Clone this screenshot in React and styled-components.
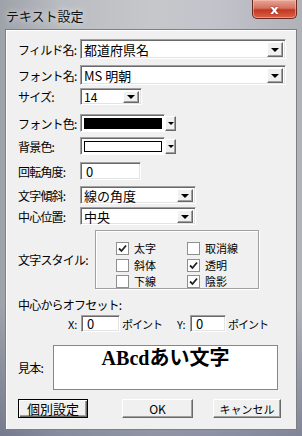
import React from "react";
import styled, { createGlobalStyle } from "styled-components";

const Global = createGlobalStyle`
	html, body {
		margin: 0;
		padding: 0;
		background: #a8adb5;
	}
	* {
		box-sizing: border-box;
	}
`;

const Window = styled.div`
	width: 302px;
	height: 436px;
	display: flex;
	flex-direction: column;
	padding: 0 5px 6px 5px;
	background: linear-gradient(
			180deg,
			rgba(0, 0, 0, 0) 70%,
			rgba(40, 50, 90, 0.35) 100%
		),
		linear-gradient(
			90deg,
			#9ea2a9 0%,
			#b9bcc1 20%,
			#c6c7ca 50%,
			#c3c3cc 70%,
			#b0b2b8 100%
		);
	font-family: "Noto Sans CJK JP", "Noto Sans", sans-serif;
	font-size: 12px;
	color: #000;
`;

const TitleBar = styled.div`
	height: 29px;
	display: flex;
	align-items: flex-start;
	justify-content: space-between;
`;

const Title = styled.div`
	margin: 6px 0 0 1px;
	font-size: 13px;
	color: #111;
	text-shadow: 0 0 6px rgba(255, 255, 255, 0.9);
`;

const CloseButton = styled.div`
	width: 45px;
	height: 19px;
	display: flex;
	align-items: center;
	justify-content: center;
	border: 1px solid #6d2a22;
	border-top: none;
	border-radius: 0 0 5px 5px;
	background: linear-gradient(180deg, #e7a596 0%, #d47260 45%, #c4381f 55%, #d8624a 100%);
	box-shadow: inset 0 0 0 1px rgba(255, 200, 190, 0.5);
	color: #fff;
	font-family: "DejaVu Sans", sans-serif;
	font-weight: 700;
	font-size: 13px;
	text-shadow: 0 0 2px #5a1a10;
`;

const Client = styled.div`
	flex: 1;
	display: flex;
	flex-direction: column;
	padding: 9px 0 0 12px;
	background: #f0f0f0;
	border: 1px solid #7c7f85;
	box-shadow: inset 1px 1px 0 #ffffff;
`;

const Row = styled.div`
	display: flex;
	align-items: center;
	margin-top: ${(p) => p.$mt || 0}px;
	height: ${(p) => p.$h || 20}px;
`;

const Label = styled.div`
	width: ${(p) => p.$w || 62}px;
	white-space: nowrap;
	flex-shrink: 0;
	letter-spacing: -0.8px;
`;

const Sunken = styled.div`
	width: ${(p) => p.$w}px;
	height: 100%;
	background: #fff;
	border-top: 1px solid #a0a0a0;
	border-left: 1px solid #a0a0a0;
	border-right: 1px solid #ffffff;
	border-bottom: 1px solid #ffffff;
	box-shadow: inset 1px 1px 0 #696969, inset -1px -1px 0 #e3e3e3;
	display: flex;
	align-items: center;
	padding: 0 2px 0 3px;
`;

const ComboText = styled.div`
	flex: 1;
	white-space: nowrap;
	font-size: ${(p) => p.$fs || 13}px;
`;

const DropButton = styled.div`
	width: ${(p) => p.$w || 16}px;
	height: calc(100% - 3px);
	margin-top: 1px;
	background: #f0f0f0;
	border-top: 1px solid #ffffff;
	border-left: 1px solid #ffffff;
	border-right: 1px solid #696969;
	border-bottom: 1px solid #696969;
	box-shadow: inset -1px -1px 0 #a0a0a0;
	display: flex;
	align-items: center;
	justify-content: center;
`;

const Arrow = styled.div`
	width: 0;
	height: 0;
	border-left: ${(p) => p.$s || 4}px solid transparent;
	border-right: ${(p) => p.$s || 4}px solid transparent;
	border-top: ${(p) => p.$s || 4}px solid #000;
`;

const Combo = ({ w, text, fs }) => (
	<Sunken $w={w}>
		<ComboText $fs={fs}>{text}</ComboText>
		<DropButton>
			<Arrow />
		</DropButton>
	</Sunken>
);

const ColorField = styled.div`
	width: 85px;
	height: 100%;
	background: #fff;
	border-top: 1px solid #a0a0a0;
	border-left: 1px solid #a0a0a0;
	border-right: 1px solid #fff;
	border-bottom: 1px solid #fff;
	box-shadow: inset 1px 1px 0 #696969;
	padding: 3px 2px 2px 3px;
`;

const Swatch = styled.div`
	width: 100%;
	height: 100%;
	border: 1px solid #000;
	background: ${(p) => p.$color};
`;

const ColorPicker = ({ color }) => (
	<>
		<ColorField>
			<Swatch $color={color} />
		</ColorField>
		<DropButton $w={11}>
			<Arrow $s={3} />
		</DropButton>
	</>
);

const Input = styled(Sunken)`
	font-size: 13px;
	padding-left: 5px;
`;

const GroupRow = styled.div`
	display: flex;
	align-items: center;
	margin-top: 5px;
`;

const GroupBox = styled.div`
	width: 164px;
	height: 59px;
	border: 1px solid #a0a0a0;
	box-shadow: inset 1px 1px 0 #fff, 1px 1px 0 #fff;
	display: grid;
	grid-template-columns: 71px 70px;
	grid-template-rows: 18px 16px 16px;
	align-items: center;
	padding: 8px 0 0 20px;
`;

const Check = styled.div`
	display: flex;
	align-items: center;
	gap: 5px;
	font-size: 11px;
	white-space: nowrap;
`;

const Box = styled.div`
	width: 13px;
	height: 13px;
	flex-shrink: 0;
	background: #fff;
	border: 1px solid #8e8f8f;
	display: flex;
	align-items: center;
	justify-content: center;
`;

const CheckBox = ({ checked, label }) => (
	<Check>
		<Box>
			{checked && (
				<svg width="9" height="9" viewBox="0 0 9 9">
					<path d="M1 4.5 L3.5 7 L8 1.5" fill="none" stroke="#222" strokeWidth="1.8" />
				</svg>
			)}
		</Box>
		{label}
	</Check>
);

const OffsetRow = styled.div`
	display: flex;
	align-items: center;
	height: 17px;
	margin-top: 4px;
	padding-left: 50px;
	font-size: 11px;
`;

const Axis = styled.div`
	width: 13px;
	font-size: 11px;
`;

const Unit = styled.div`
	margin-left: 2px;
	width: ${(p) => p.$w || 60}px;
	font-size: 11px;
	letter-spacing: -1px;
	white-space: nowrap;
`;

const SampleRow = styled.div`
	display: flex;
	align-items: center;
	margin-top: 13px;
`;

const SampleBox = styled.div`
	width: 225px;
	height: 45px;
	background: #fff;
	border: 1px solid #828790;
	display: flex;
	justify-content: center;
	padding-top: 1px;
	font-family: "Liberation Serif", "Noto Sans CJK JP", serif;
	font-weight: 700;
	font-size: 20px;
	line-height: 22px;
`;

const ButtonRow = styled.div`
	display: flex;
	margin-top: 9px;
	height: 19px;
`;

const Button = styled.div`
	width: ${(p) => p.$w}px;
	margin-left: ${(p) => p.$ml || 0}px;
	display: flex;
	align-items: center;
	justify-content: center;
	background: #f0f0f0;
	font-size: ${(p) => p.$fs || 12}px;
	border-top: 1px solid ${(p) => (p.$default ? "#000" : "#ffffff")};
	border-left: 1px solid ${(p) => (p.$default ? "#000" : "#ffffff")};
	border-right: 1px solid ${(p) => (p.$default ? "#000" : "#696969")};
	border-bottom: 1px solid ${(p) => (p.$default ? "#000" : "#696969")};
	box-shadow: ${(p) =>
		p.$default
			? "inset 1px 1px 0 #fff, inset -1px -1px 0 #696969, inset -2px -2px 0 #a0a0a0"
			: "inset -1px -1px 0 #a0a0a0"};
`;

export default function App() {
	return (
		<>
			<Global />
			<Window>
				<TitleBar>
					<Title>テキスト設定</Title>
					<CloseButton>x</CloseButton>
				</TitleBar>
				<Client>
					<Row $h={20}>
						<Label>フィルド名:</Label>
						<Combo w={206} text="都道府県名" />
					</Row>
					<Row $h={20} $mt={6}>
						<Label>フォント名:</Label>
						<Combo w={206} text="MS 明朝" />
					</Row>
					<Row $h={17} $mt={3}>
						<Label>サイズ:</Label>
						<Combo w={62} text="14" fs={12} />
					</Row>
					<Row $h={18} $mt={9}>
						<Label>フォント色:</Label>
						<ColorPicker color="#000" />
					</Row>
					<Row $h={18} $mt={5}>
						<Label>背景色:</Label>
						<ColorPicker color="#fff" />
					</Row>
					<Row $h={18} $mt={7}>
						<Label>回転角度:</Label>
						<Input $w={61}>0</Input>
					</Row>
					<Row $h={18} $mt={6}>
						<Label>文字傾斜:</Label>
						<Combo w={116} text="線の角度" />
					</Row>
					<Row $h={18} $mt={3}>
						<Label>中心位置:</Label>
						<Combo w={116} text="中央" />
					</Row>
					<GroupRow>
						<Label $w={77}>文字スタイル:</Label>
						<GroupBox>
							<CheckBox checked label="太字" />
							<CheckBox label="取消線" />
							<CheckBox label="斜体" />
							<CheckBox checked label="透明" />
							<CheckBox label="下線" />
							<CheckBox checked label="陰影" />
						</GroupBox>
					</GroupRow>
					<Row $h={14} $mt={8}>
						<Label $w={120}>中心からオフセット:</Label>
					</Row>
					<OffsetRow>
						<Axis>X:</Axis>
						<Input $w={39}>0</Input>
						<Unit $w={55}>ポイント</Unit>
						<Axis>Y:</Axis>
						<Input $w={36}>0</Input>
						<Unit>ポイント</Unit>
					</OffsetRow>
					<SampleRow>
						<Label $w={35}>見本:</Label>
						<SampleBox>ABcdあい文字</SampleBox>
					</SampleRow>
					<ButtonRow>
						<Button $w={70} $default $fs={13}>個別設定</Button>
						<Button $w={71} $ml={34}>OK</Button>
						<Button $w={68} $ml={20} $fs={11}>キャンセル</Button>
					</ButtonRow>
				</Client>
			</Window>
		</>
	);
}
